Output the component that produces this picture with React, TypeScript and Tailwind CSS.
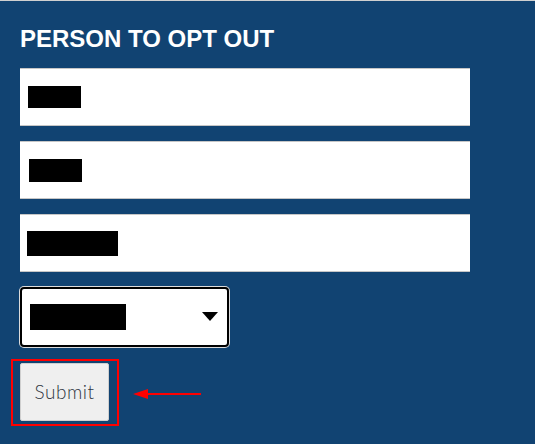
import { useState } from "react"

// black bars stand in for the redacted field values
function Redacted({ w, h, ml }: { w: string; h: string; ml: string }) {
  return <div className={`bg-black ${w} ${h} ${ml}`} />
}

export default function App() {
  const [focused] = useState(true)

  return (
    <div className="w-[535px] h-[444px] bg-[#114372] border-t border-[#d0d0d0] overflow-hidden font-['Liberation_Sans',Arial,sans-serif]">
      <div className="pl-5 pt-[24px]">
        <h2 className="text-[24px] leading-[28px] font-bold text-white">PERSON TO OPT OUT</h2>

        <div className="mt-[15px] flex flex-col gap-[15px]">
          <div className="w-[450px] h-[58px] bg-white border-y border-[#c6c6c6] flex items-center">
            <Redacted w="w-[53px]" h="h-[22px]" ml="ml-2" />
          </div>
          <div className="w-[450px] h-[58px] bg-white border-y border-[#c6c6c6] flex items-center">
            <Redacted w="w-[53px]" h="h-[23px]" ml="ml-[9px]" />
          </div>
          <div className="w-[450px] h-[58px] bg-white border-y border-[#c6c6c6] flex items-center">
            <Redacted w="w-[91px]" h="h-[25px]" ml="ml-[7px]" />
          </div>
        </div>

        <div
          className={`mt-[15px] w-[209px] h-[60px] bg-white rounded-[4px] border-2 border-black flex items-center justify-between ${
            focused ? "ring-1 ring-[#dcdcdc]" : ""
          }`}
        >
          <Redacted w="w-[96px]" h="h-[26px]" ml="ml-2" />
          <svg width="16" height="10" viewBox="0 0 16 10" className="mr-[9px]">
            <path d="M0 0h16L8 9z" fill="#000" />
          </svg>
        </div>

        <div className="mt-[12px] flex items-center">
          <div className="-ml-[9px] border-2 border-[#ff0000] pl-[7px] pr-2 pt-[2px] pb-[3px]">
            <button className="w-[89px] h-[58px] bg-[#efefef] border border-[#cfcfcf] rounded-[2px] text-[19px] tracking-[0.5px] text-[#2e3440] font-light font-['Lato',sans-serif]">
              Submit
            </button>
          </div>
          <svg width="70" height="12" viewBox="0 0 70 12" className="ml-[14px] mt-[3px]">
            <path d="M0 6L15 1v10z" fill="#ff0000" />
            <path d="M12 6H68" stroke="#ff0000" strokeWidth="2" />
          </svg>
        </div>
      </div>
    </div>
  )
}
